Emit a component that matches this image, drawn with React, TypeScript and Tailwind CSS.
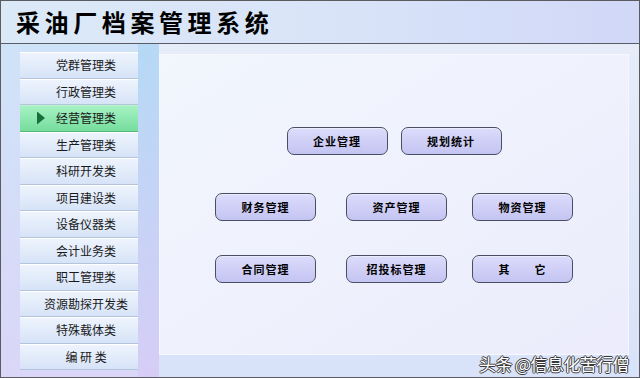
const menu = [
  '党群管理类',
  '行政管理类',
  '经营管理类',
  '生产管理类',
  '科研开发类',
  '项目建设类',
  '设备仪器类',
  '会计业务类',
  '职工管理类',
  '资源勘探开发类',
  '特殊载体类',
  '编 研 类',
];

const ActionButton = ({ label, className = '' }: { label: string; className?: string }) => (
  <button
    className={`flex h-[28px] w-[101px] items-center justify-center rounded-[7px] border border-[#4a4e62] bg-gradient-to-b from-[#dcdcfc] to-[#c4c4f2] text-[11px] font-bold tracking-[1px] text-black shadow-[inset_0_1px_0_#ececff] ${className}`}
  >
    {label}
  </button>
);

export default function App() {
  const active = '经营管理类';

  return (
    <div className="relative flex h-[378px] w-[640px] flex-col overflow-hidden border border-[#5c5c60] font-['Noto_Sans_CJK_SC',sans-serif] text-black">
      <header className="flex h-[43px] shrink-0 items-center border-b border-[#5a5d66] bg-gradient-to-r from-[#dbe9f7] via-[#d9e4f8] to-[#d1d8f8] pl-[15px]">
        <h1 className="text-[24px] font-bold leading-none tracking-[4.6px]">采油厂档案管理系统</h1>
      </header>

      <div className="flex flex-1">
        <aside className="flex w-[158px] shrink-0 bg-gradient-to-b from-[#cfe3f8] to-[#dad6f8]">
          <nav className="ml-[19px] mt-[8px] grid h-[318px] w-[119px] grid-rows-12">
            {menu.map((item) => {
              const selected = item === active;
              return (
                <div
                  key={item}
                  className={
                    selected
                      ? 'relative flex items-center justify-center border-y border-t-[#b8f4cc] border-b-[#58b87c] bg-gradient-to-b from-[#a6f2c4] to-[#74dd9c] pl-[14px] text-[12px] text-[#1a1a1a]'
                      : 'flex items-center justify-center border-y border-t-white border-b-[#b3c4dc] bg-gradient-to-b from-[#eef4fd] to-[#d6e3f7] pl-[14px] text-[12px] text-[#1a1a1a]'
                  }
                >
                  {selected && (
                    <svg className="absolute left-[17px] top-1/2 -translate-y-1/2" width="8" height="13" viewBox="0 0 8 13">
                      <polygon points="0,0 8,6.5 0,13" fill="#17703a" />
                    </svg>
                  )}
                  {item}
                </div>
              );
            })}
          </nav>
          <div className="ml-auto w-[21px] bg-gradient-to-b from-[#b5d9f6] to-[#d6cdf6]" />
        </aside>

        <main className="flex flex-1 flex-col bg-gradient-to-b from-[#e6edf9] to-[#d8e2f9] pb-[22px] pr-[10px] pt-[10px]">
          <section className="flex flex-1 flex-col items-center border border-[#f6f8ff] bg-gradient-to-br from-[#f2f6fd] to-[#ececfc] pt-[72px]">
            <div className="flex gap-[13px]">
              <ActionButton label="企业管理" />
              <ActionButton label="规划统计" />
            </div>
            <div className="mt-[38px] flex">
              <ActionButton label="财务管理" />
              <ActionButton label="资产管理" className="ml-[30px]" />
              <ActionButton label="物资管理" className="ml-[25px]" />
            </div>
            <div className="mt-[34px] flex">
              <ActionButton label="合同管理" />
              <ActionButton label="招投标管理" className="ml-[30px]" />
              <ActionButton label="其　　它" className="ml-[25px]" />
            </div>
          </section>
        </main>
      </div>

      <div className="absolute bottom-[5px] right-[10px] text-[17px] leading-none tracking-[-0.6px] text-white [text-shadow:1px_0_0_#3a3a3a,-1px_0_0_#3a3a3a,0_1px_0_#3a3a3a,0_-1px_0_#3a3a3a]">
        头条 @信息化苦行僧
      </div>
    </div>
  );
}
